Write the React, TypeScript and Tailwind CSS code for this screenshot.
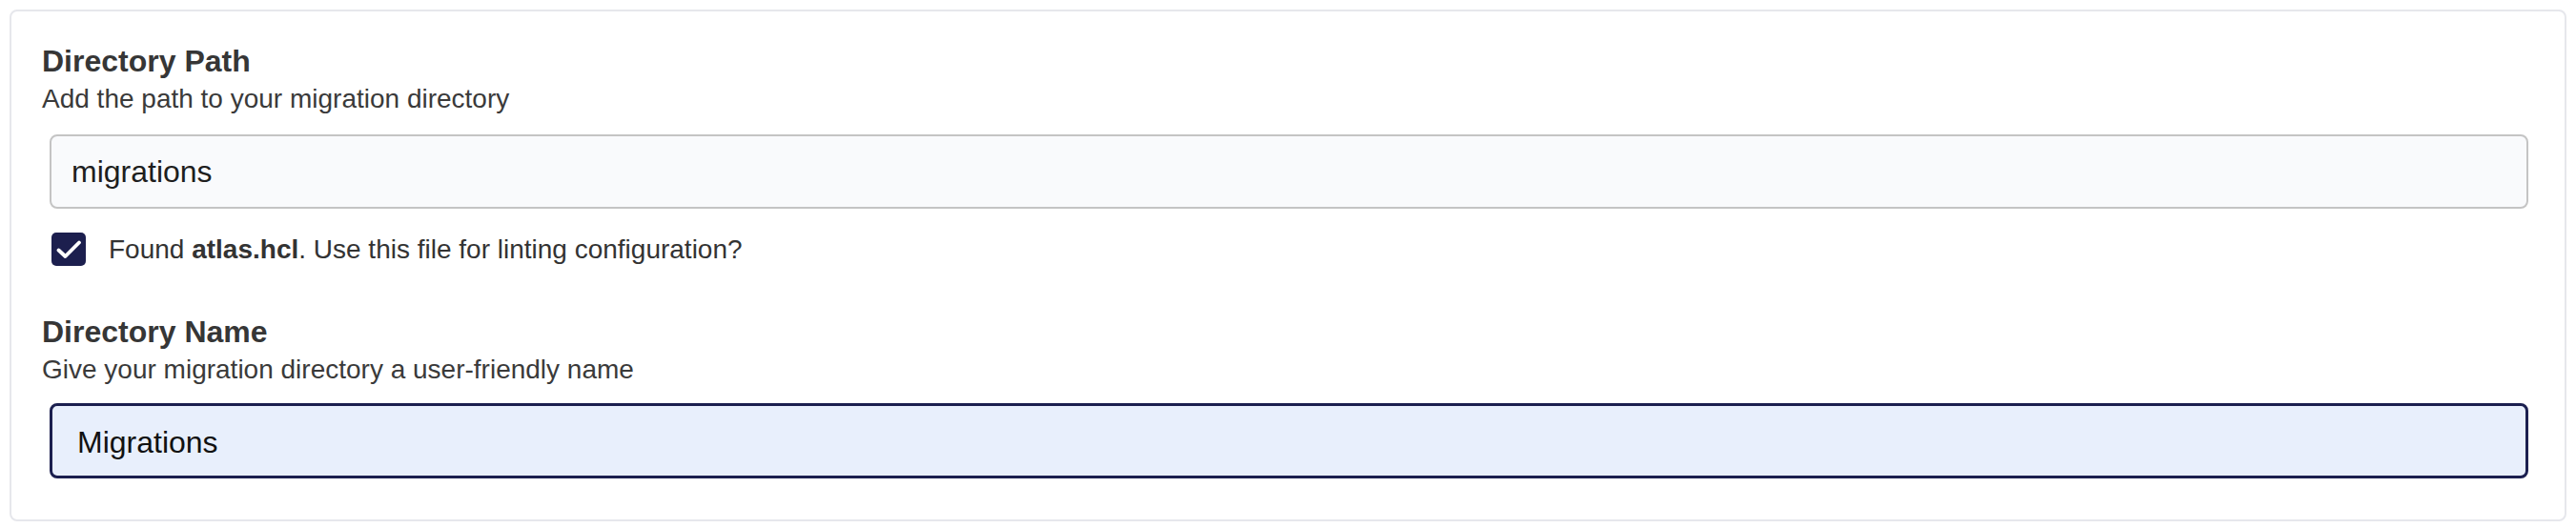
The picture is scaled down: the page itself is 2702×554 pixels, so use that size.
import React from 'react';

const Field: React.FC<{ title: string; hint: string; className?: string }> = ({ title, hint, className = '' }) => (
  <div className={className}>
    <h3 className="text-[32px] leading-[36px] font-bold text-[#363636]">{title}</h3>
    <p className="mt-[6px] text-[28px] leading-[32px] text-[#3a3a3a]">{hint}</p>
  </div>
);

export default function App() {
  return (
    <div className="min-h-screen bg-white pt-[10px] pl-[10px] [font-family:'Liberation_Sans',Arial,sans-serif]">
      <div className="w-[2682px] h-[537px] rounded-[8px] border-2 border-[#e6e7ec] bg-white px-[32px] pt-[34px]">
        <Field title="Directory Path" hint="Add the path to your migration directory" />

        <input
          readOnly
          value="migrations"
          className="mt-[21px] ml-[8px] block w-[2600px] h-[78px] rounded-[8px] border-2 border-[#c4c4c4] bg-[#f9fafc] pl-[21px] text-[32px] text-[#1e1e1e] outline-none [font-family:'Liberation_Sans',Arial,sans-serif]"
        />

        <div className="mt-[25px] ml-[10px] flex items-center gap-[24px]">
          <div className="flex h-[35px] w-[36px] shrink-0 items-center justify-center rounded-[5px] bg-[#1c1f4e]">
            <svg width="36" height="35" viewBox="0 0 36 35" fill="none">
              <polyline
                points="7.5,18.5 14.5,25 29,10.5"
                stroke="#ffffff"
                strokeWidth="3.8"
                strokeLinecap="round"
                strokeLinejoin="round"
              />
            </svg>
          </div>
          <p className="text-[28px] leading-[32px] text-[#333333]">
            Found <span className="font-bold">atlas.hcl</span>. Use this file for linting configuration?
          </p>
        </div>

        <Field
          className="mt-[51px]"
          title="Directory Name"
          hint="Give your migration directory a user-friendly name"
        />

        <input
          readOnly
          value="Migrations"
          className="mt-[19px] ml-[8px] block w-[2600px] h-[79px] rounded-[8px] border-[3px] border-[#1b1f4f] bg-[#e8effc] pl-[26px] pt-[4px] text-[32px] text-[#111111] outline-none [font-family:'Liberation_Sans',Arial,sans-serif]"
        />
      </div>
    </div>
  );
}
